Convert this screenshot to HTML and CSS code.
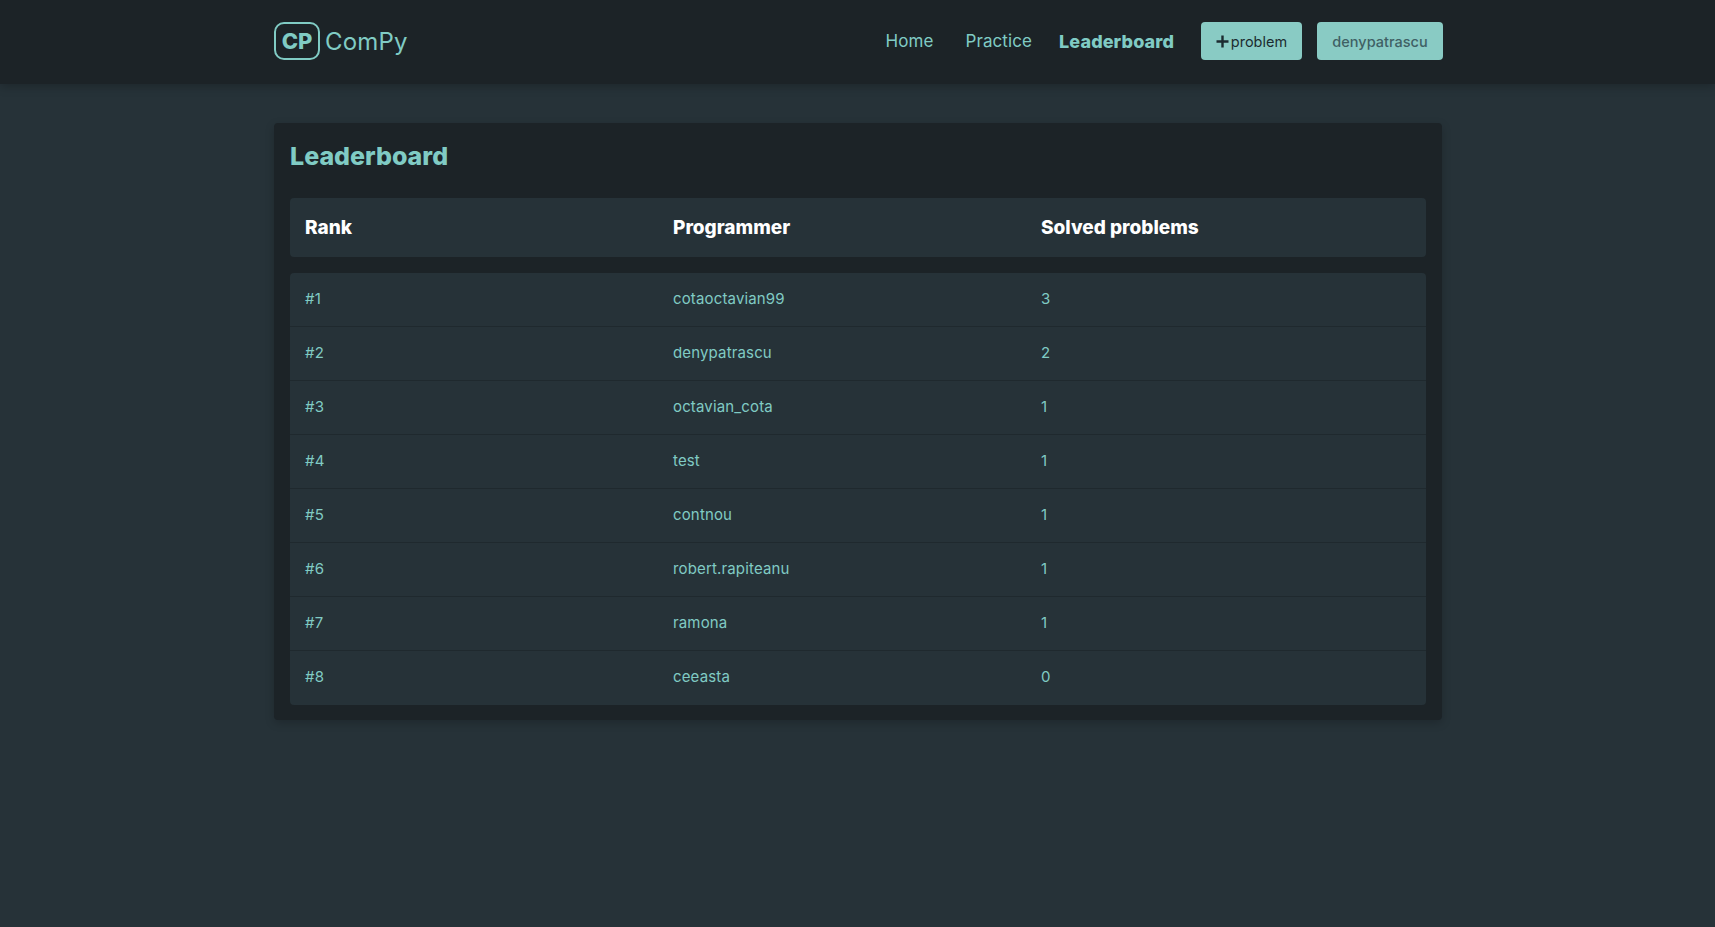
FILE: index.html
```html
<!DOCTYPE html>
<html lang="en">
<head>
<meta charset="utf-8">
<title>ComPy - Leaderboard</title>
<link rel="stylesheet" href="styles.css">
</head>
<body>
<header class="navbar">
  <div class="navbar-inner">
    <a class="brand" href="#"><span class="brand-box">CP</span><span class="brand-name">ComPy</span></a>
    <nav class="nav">
      <a class="nav-link" href="#">Home</a>
      <a class="nav-link" href="#">Practice</a>
      <a class="nav-link nav-active" href="#">Leaderboard</a>
      <a class="btn btn-add" href="#"><svg class="plus" viewBox="0 0 13 13" width="13" height="13"><path d="M6.5 0.5v12M0.5 6.5h12" stroke="#1c2b30" stroke-width="2.4" fill="none"/></svg>problem</a>
      <a class="btn btn-user" href="#">denypatrascu</a>
    </nav>
  </div>
</header>
<main class="card">
  <h1 class="title">Leaderboard</h1>
  <div class="table-head">
    <div class="cell">Rank</div><div class="cell">Programmer</div><div class="cell">Solved problems</div>
  </div>
  <div class="table-body">
    <div class="row"><div class="cell">#1</div><div class="cell">cotaoctavian99</div><div class="cell">3</div></div>
    <div class="row"><div class="cell">#2</div><div class="cell">denypatrascu</div><div class="cell">2</div></div>
    <div class="row"><div class="cell">#3</div><div class="cell">octavian_cota</div><div class="cell">1</div></div>
    <div class="row"><div class="cell">#4</div><div class="cell">test</div><div class="cell">1</div></div>
    <div class="row"><div class="cell">#5</div><div class="cell">contnou</div><div class="cell">1</div></div>
    <div class="row"><div class="cell">#6</div><div class="cell">robert.rapiteanu</div><div class="cell">1</div></div>
    <div class="row"><div class="cell">#7</div><div class="cell">ramona</div><div class="cell">1</div></div>
    <div class="row"><div class="cell">#8</div><div class="cell">ceeasta</div><div class="cell">0</div></div>
  </div>
</main>
</body>
</html>
```
FILE: styles.css
```css
* { box-sizing: border-box; }
html, body { margin: 0; height: 100%; }
body {
  background: #263238;
  color: #80cbc4;
  font-family: Inter, "Liberation Sans", sans-serif;
  overflow: hidden;
}
a { color: inherit; text-decoration: none; }
.navbar {
  height: 84px;
  padding-bottom: 2px;
  background: #1c2327;
  box-shadow: 0 2px 10px rgba(0, 0, 0, 0.25);
}
.navbar-inner {
  width: 1169px;
  margin-left: 274px;
  height: 100%;
  display: flex;
  align-items: center;
  justify-content: space-between;
}
.brand { display: flex; align-items: center; gap: 5px; }
.brand-box {
  width: 46px;
  height: 38px;
  border: 2px solid #80cbc4;
  border-radius: 10px;
  display: flex;
  align-items: center;
  justify-content: center;
  font-size: 22px;
  font-weight: 800;
}
.brand-name { font-size: 24px; letter-spacing: 0.2px; }
.nav { display: flex; align-items: center; }
.nav-link { font-size: 17px; margin-right: 32px; letter-spacing: 0.1px; }
.nav-link:nth-child(2) { margin-right: 27px; }
.nav-active { font-weight: 800; margin-right: 27px; font-size: 18px; letter-spacing: 0.1px; }
.btn {
  height: 38px;
  background: #89cbc4;
  border-radius: 4px;
  display: flex;
  align-items: center;
  font-size: 14.5px;
}
.btn-add { width: 101px; justify-content: center; gap: 2px; color: #1c2b30; margin-right: 15px; }
.plus { flex: none; }
.btn-user { width: 126px; justify-content: center; color: #3f6064; font-weight: 500; }
.card {
  width: 1168px;
  height: 597px;
  margin: 39px 0 0 274px;
  padding: 16px;
  background: #1c2327;
  border-radius: 4px;
  box-shadow: 0 3px 10px rgba(0, 0, 0, 0.2);
}
.title {
  margin: 0;
  height: 59px;
  font-size: 25px;
  line-height: 35px;
  font-weight: 800;
  color: #80cbc4;
}
.table-head, .row {
  display: grid;
  grid-template-columns: repeat(3, 368px);
  align-items: center;
}
.table-head {
  height: 59px;
  background: #263238;
  border-radius: 4px;
  margin-bottom: 16px;
  color: #fff;
  font-size: 19px;
  font-weight: 800;
}
.table-body { background: #263238; border-radius: 4px; }
.row {
  height: 54px;
  border-bottom: 1px solid #1f292e;
  font-size: 15px;
  letter-spacing: 0.15px;
}
.row .cell { padding-bottom: 2px; }
.row:last-child { border-bottom-color: transparent; }
.cell { padding-left: 15px; }
```
